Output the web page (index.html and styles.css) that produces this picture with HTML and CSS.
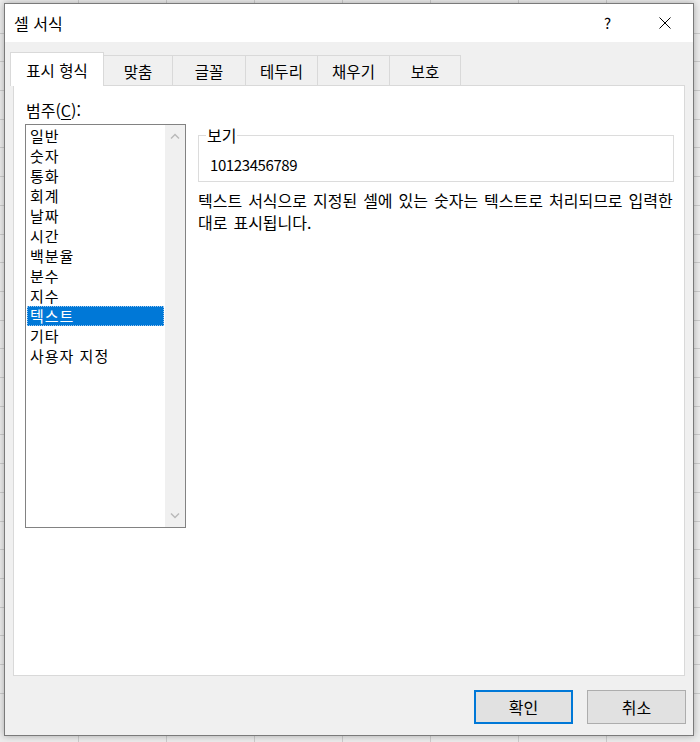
FILE: index.html
```html
<!DOCTYPE html>
<html lang="ko">
<head>
<meta charset="utf-8">
<title>셀 서식</title>
<link rel="stylesheet" href="styles.css">
</head>
<body>
<div class="dialog">
  <div class="titlebar">
    <span class="title">셀 서식</span>
    <span class="tbtn help">?</span>
    <span class="tbtn close">
      <svg width="12" height="12" viewBox="0 0 12 12"><path d="M0.5 0.5 L11.5 11.5 M11.5 0.5 L0.5 11.5" stroke="#000" stroke-width="1" fill="none"/></svg>
    </span>
  </div>
  <div class="body">
    <div class="tabs">
      <div class="tab active t1">표시 형식</div>
      <div class="tab t2">맞춤</div>
      <div class="tab t3">글꼴</div>
      <div class="tab t4">테두리</div>
      <div class="tab t5">채우기</div>
      <div class="tab t6">보호</div>
    </div>
    <div class="panel">
      <div class="cat">
        <div class="cat-label">범주(<u>C</u>):</div>
        <div class="listbox">
          <ul class="items">
            <li class="item">일반</li>
            <li class="item">숫자</li>
            <li class="item">통화</li>
            <li class="item">회계</li>
            <li class="item">날짜</li>
            <li class="item">시간</li>
            <li class="item">백분율</li>
            <li class="item">분수</li>
            <li class="item">지수</li>
            <li class="item sel">텍스트</li>
            <li class="item">기타</li>
            <li class="item">사용자 지정</li>
          </ul>
          <div class="scroll">
            <svg width="10" height="6" viewBox="0 0 10 6"><path d="M1 5.5 L5 1.5 L9 5.5" stroke="#b9b9b9" stroke-width="1.4" fill="none"/></svg>
            <svg width="10" height="6" viewBox="0 0 10 6"><path d="M1 0.5 L5 4.5 L9 0.5" stroke="#b9b9b9" stroke-width="1.4" fill="none"/></svg>
          </div>
        </div>
      </div>
      <div class="detail">
        <fieldset class="preview">
          <legend>보기</legend>
          <div class="value">10123456789</div>
        </fieldset>
        <p class="desc">텍스트 서식으로 지정된 셀에 있는 숫자는 텍스트로 처리되므로 입력한<br>대로 표시됩니다.</p>
      </div>
    </div>
    <div class="buttons">
      <button class="btn default">확인</button>
      <button class="btn">취소</button>
    </div>
  </div>
</div>
</body>
</html>
```
FILE: styles.css
```css
* { box-sizing: border-box; }

html, body { margin: 0; padding: 0; }

body {
  width: 700px;
  height: 742px;
  overflow: hidden;
  font-family: "Noto Sans CJK KR", "Noto Sans", sans-serif;
  font-size: 16px;
  color: #000;
  background-color: #ededed;
  background-image:
    repeating-linear-gradient(to bottom, transparent 0 27.7px, #cdcdcd 27.7px 28.7px),
    repeating-linear-gradient(to right, transparent 0 87px, #cdcdcd 87px 88px);
  background-position: 0 5px, -9px 0;
}

.dialog {
  margin: 3px 0 0 4px;
  width: 690px;
  height: 733px;
  border: 1px solid #7a7a7a;
  background: #f0f0f0;
  display: flex;
  flex-direction: column;
  box-shadow: 0 0 7px rgba(0, 0, 0, 0.3);
}

.titlebar {
  height: 38px;
  background: #fff;
  display: flex;
  align-items: center;
  padding-left: 9px;
  flex: none;
}

.title { line-height: 20px; flex: 1; }

.tbtn {
  width: 57px;
  height: 38px;
  display: flex;
  align-items: center;
  justify-content: center;
  line-height: 20px;
  font-size: 15px;
}

.body {
  flex: 1;
  padding: 10px 0 0 5px;
  display: flex;
  flex-direction: column;
}

.tabs {
  display: flex;
  align-items: flex-end;
  height: 33px;
}

.tab {
  height: 30px;
  border: 1px solid #d9d9d9;
  border-bottom: none;
  margin-left: -1px;
  background: #f0f0f0;
  display: flex;
  align-items: center;
  justify-content: center;
  line-height: 20px;
  font-size: 15.5px;
}

.tab.active {
  height: 34px;
  margin-left: 0;
  margin-bottom: -1px;
  background: #fff;
  position: relative;
  z-index: 1;
}

.t1 { width: 94px; }
.t2 { width: 70px; }
.t3 { width: 74px; }
.t4 { width: 73px; }
.t5 { width: 73px; }
.t6 { width: 72px; }

.panel {
  margin-left: 3px;
  width: 672px;
  height: 591px;
  background: #fff;
  border: 1px solid #d9d9d9;
  display: flex;
  align-items: flex-start;
}

.cat {
  margin-left: 11px;
  display: flex;
  flex-direction: column;
}

.cat-label {
  margin-top: 14px;
  margin-bottom: 4px;
  padding-left: 1px;
  line-height: 20px;
}

.cat-label u { text-underline-offset: 2px; }

.listbox {
  width: 161px;
  height: 404px;
  border: 1px solid #828282;
  display: flex;
}

.items {
  list-style: none;
  margin: 0;
  padding: 1px 1px 0 1px;
  flex: 1;
}

.item {
  height: 20px;
  line-height: 20px;
  padding-left: 3px;
  white-space: nowrap;
  font-size: 15px;
  letter-spacing: 1px;
}

.item.sel {
  background: #0078d7;
  color: #fff;
  outline: 1px dotted #9cc7ef;
  outline-offset: -1px;
}

.scroll {
  width: 20px;
  flex: none;
  background: #f0f0f0;
  display: flex;
  flex-direction: column;
  justify-content: space-between;
  align-items: center;
  padding: 8px 0 8px;
}

.scroll svg { display: block; }

.detail {
  margin-left: 12px;
  width: 476px;
}

.preview {
  margin: 39px 0 0;
  padding: 0;
  width: 476px;
  min-width: 0;
  border: 1px solid #dcdcdc;
}

.preview legend {
  margin-left: 7px;
  padding: 0 1px;
  line-height: 20px;
}

.value {
  padding: 10px 0 6px 11px;
  line-height: 20px;
  font-size: 15px;
  letter-spacing: -0.4px;
}

.desc {
  margin: 7px 0 0;
  line-height: 22px;
  word-spacing: 1.5px;
  white-space: nowrap;
}

.buttons {
  display: flex;
  justify-content: flex-end;
  gap: 14px;
  margin-top: 14px;
  padding-right: 7px;
}

.btn {
  width: 99px;
  height: 34px;
  border: 1px solid #adadad;
  background: #e1e1e1;
  font: inherit;
  color: #000;
  padding: 0;
  display: flex;
  align-items: center;
  justify-content: center;
  line-height: 20px;
}

.btn.default { border: 2px solid #0078d7; }
```
